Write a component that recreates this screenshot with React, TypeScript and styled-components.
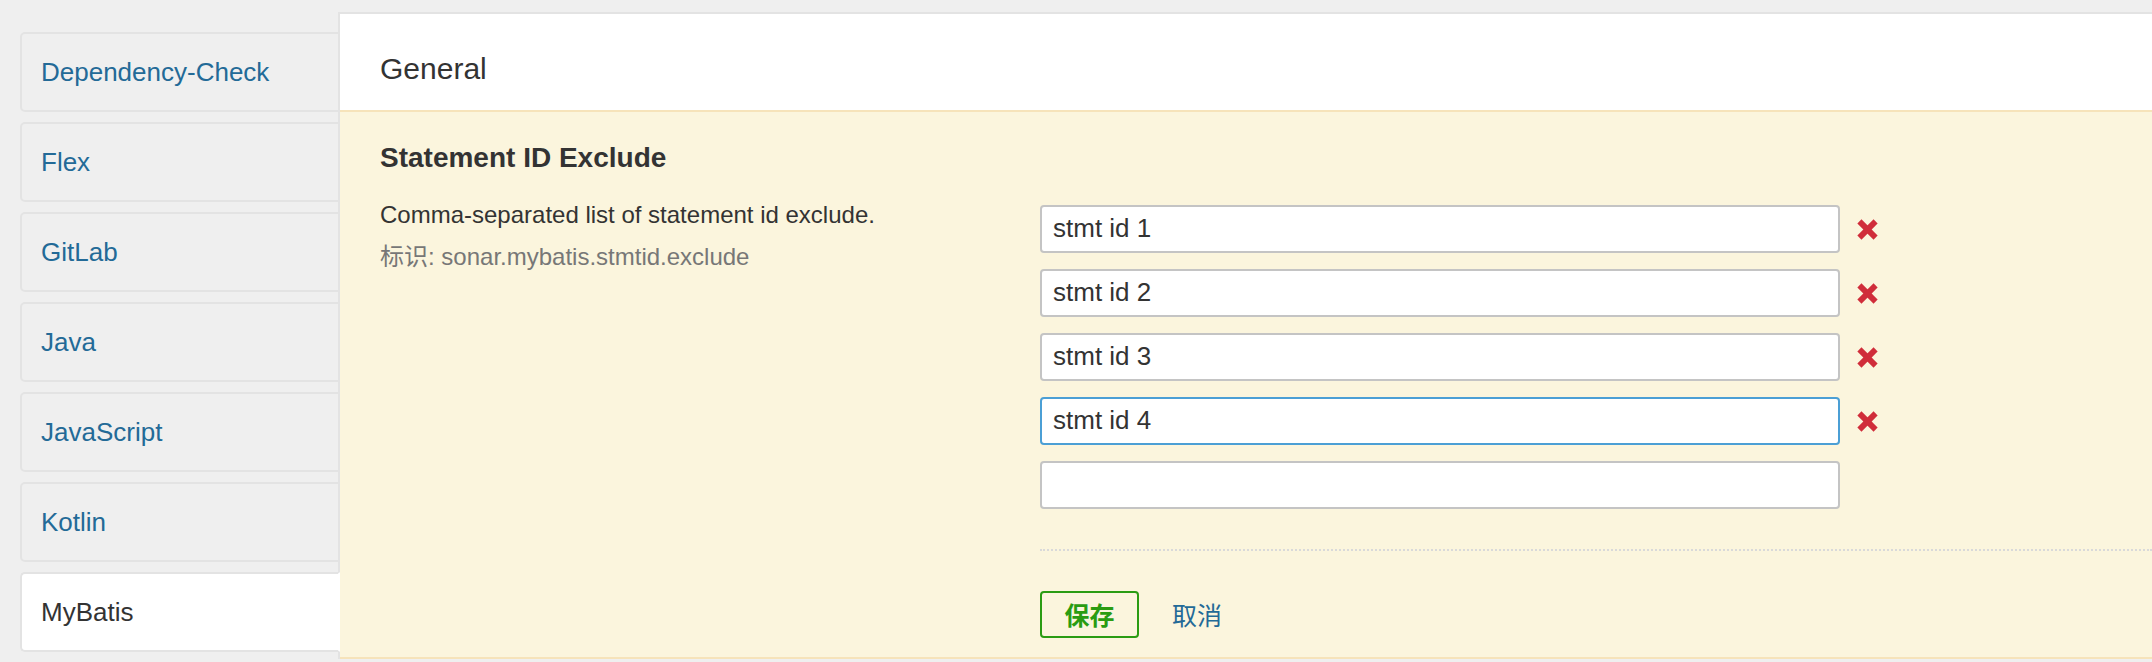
import React from "react";
import styled, { createGlobalStyle } from "styled-components";

const GlobalStyle = createGlobalStyle`
  html, body {
    margin: 0;
    padding: 0;
    background: #efefef;
    font-family: "Liberation Sans", "Noto Sans CJK SC", Arial, sans-serif;
    color: #333;
  }
  * { box-sizing: border-box; }
`;

const Page = styled.div`
  display: flex;
  align-items: flex-start;
  padding: 12px 0 0 20px;
  height: 662px;
  overflow: hidden;
`;

const Sidebar = styled.nav`
  width: 320px;
  flex: none;
  margin-top: 20px;
  margin-right: -2px;
  position: relative;
  z-index: 1;
  display: flex;
  flex-direction: column;
  gap: 10px;
`;

const SideItem = styled.a<{ $active?: boolean }>`
  display: flex;
  align-items: center;
  height: 80px;
  padding: 0 0 0 19px;
  border: 2px solid #e3e3e3;
  border-right-color: ${(p) => (p.$active ? "#fff" : "#e3e3e3")};
  border-radius: 5px 0 0 5px;
  background: ${(p) => (p.$active ? "#fff" : "#efefef")};
  color: ${(p) => (p.$active ? "#333" : "#236a97")};
  font-size: 26px;
  text-decoration: none;
  cursor: pointer;
`;

const Panel = styled.section`
  flex: 1;
  min-width: 0;
  background: #fff;
  border-top: 2px solid #e3e3e3;
  border-left: 2px solid #e3e3e3;
`;

const PanelHeader = styled.header`
  height: 98px;
  display: flex;
  align-items: center;
  padding: 13px 40px 0;
  font-size: 30px;
  color: #333;
  border-bottom: 2px solid #f6e3ba;
`;

const PanelBody = styled.div`
  background: #fbf5dd;
  padding: 29px 0 19px 40px;
  border-bottom: 2px solid #f6e3ba;
`;

const SettingTitle = styled.h3`
  margin: 0;
  font-size: 28px;
  line-height: 1.2;
  font-weight: bold;
  color: #333;
`;

const SettingRow = styled.div`
  display: flex;
  margin-top: 30px;
`;

const DescColumn = styled.div`
  width: 660px;
  flex: none;
`;

const Description = styled.div`
  font-size: 24px;
  line-height: 20px;
  color: #333;
`;

const SettingKey = styled.div`
  margin-top: 22px;
  font-size: 24px;
  line-height: 20px;
  color: #777;
`;

const ValueColumn = styled.div`
  flex: 1;
  min-width: 0;
  display: flex;
  flex-direction: column;
`;

const InputList = styled.div`
  display: flex;
  flex-direction: column;
  gap: 16px;
`;

const InputRow = styled.div`
  display: flex;
  align-items: center;
  gap: 17px;
`;

const TextInput = styled.input<{ $focused?: boolean }>`
  width: 800px;
  height: 48px;
  padding: 0 11px;
  border: 2px solid ${(p) => (p.$focused ? "#4b9fd5" : "#c4c4c4")};
  border-radius: 4px;
  background: #fff;
  font-family: "Liberation Sans", "Noto Sans CJK SC", Arial, sans-serif;
  font-size: 26px;
  color: #333;
  outline: none;
`;

const DeleteButton = styled.button`
  width: 21px;
  height: 21px;
  padding: 0;
  border: 0;
  background: none;
  display: flex;
  cursor: pointer;
  margin-top: 2px;
`;

const Actions = styled.div`
  margin-top: 40px;
  padding-top: 40px;
  border-top: 2px dotted #d9d9d9;
  display: flex;
  align-items: center;
  gap: 33px;
`;

const SaveButton = styled.button`
  width: 99px;
  height: 47px;
  border: 2px solid #2a9c12;
  border-radius: 4px;
  background: transparent;
  color: #2a9c12;
  font-family: "Liberation Sans", "Noto Sans CJK SC", sans-serif;
  font-size: 25px;
  font-weight: 600;
  padding: 0;
  cursor: pointer;
`;

const CancelLink = styled.a`
  color: #236a97;
  font-size: 25px;
  text-decoration: none;
  cursor: pointer;
`;

const DeleteIcon = () => (
  <svg width="21" height="21" viewBox="0 0 21 21" aria-hidden="true">
    <g stroke="#d02d3a" strokeWidth="5.8" strokeLinecap="butt">
      <line x1="2.4" y1="2.4" x2="18.6" y2="18.6" />
      <line x1="18.6" y1="2.4" x2="2.4" y2="18.6" />
    </g>
  </svg>
);

const categories = [
  "Dependency-Check",
  "Flex",
  "GitLab",
  "Java",
  "JavaScript",
  "Kotlin",
  "MyBatis",
];

const values = ["stmt id 1", "stmt id 2", "stmt id 3", "stmt id 4"];

export default function App() {
  return (
    <>
      <GlobalStyle />
      <Page>
        <Sidebar>
          {categories.map((c) => (
            <SideItem key={c} $active={c === "MyBatis"}>
              {c}
            </SideItem>
          ))}
        </Sidebar>
        <Panel>
          <PanelHeader>General</PanelHeader>
          <PanelBody>
            <SettingTitle>Statement ID Exclude</SettingTitle>
            <SettingRow>
              <DescColumn>
                <Description>Comma-separated list of statement id exclude.</Description>
                <SettingKey>标识: sonar.mybatis.stmtid.exclude</SettingKey>
              </DescColumn>
              <ValueColumn>
                <InputList>
                  {values.map((v, i) => (
                    <InputRow key={v}>
                      <TextInput defaultValue={v} $focused={i === 3} />
                      <DeleteButton aria-label="delete">
                        <DeleteIcon />
                      </DeleteButton>
                    </InputRow>
                  ))}
                  <InputRow>
                    <TextInput defaultValue="" />
                  </InputRow>
                </InputList>
                <Actions>
                  <SaveButton>保存</SaveButton>
                  <CancelLink>取消</CancelLink>
                </Actions>
              </ValueColumn>
            </SettingRow>
          </PanelBody>
        </Panel>
      </Page>
    </>
  );
}
